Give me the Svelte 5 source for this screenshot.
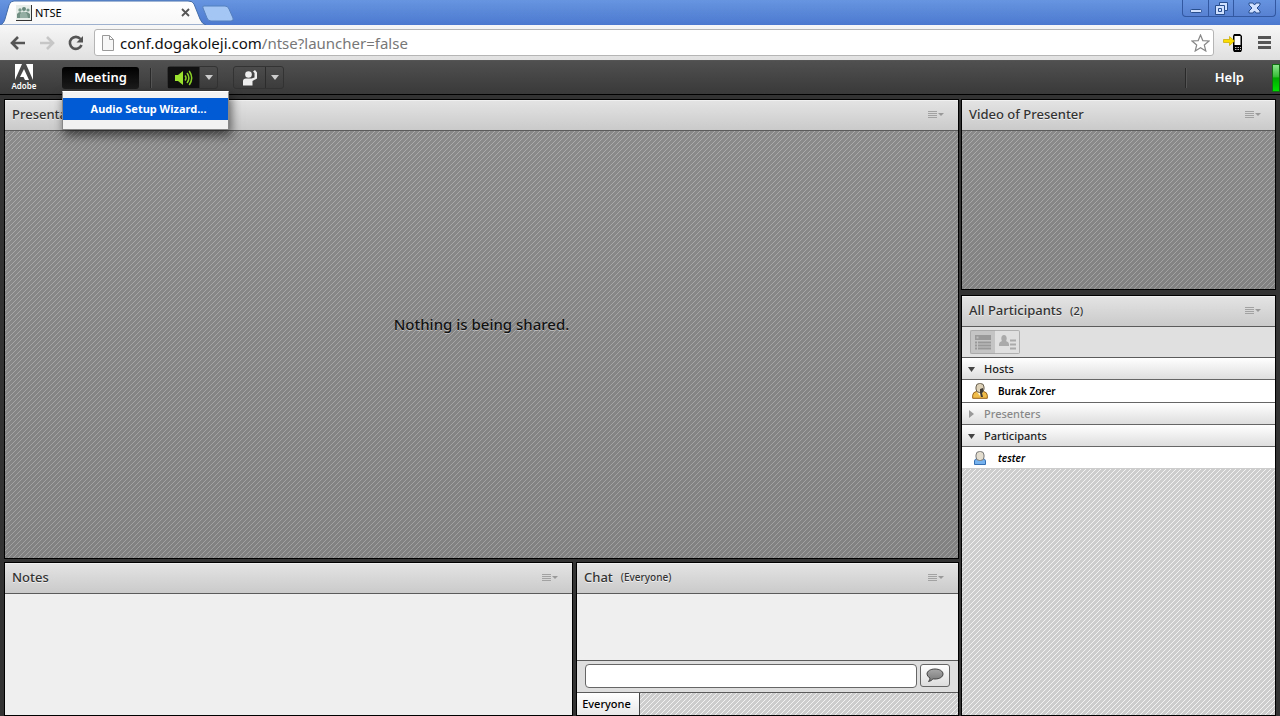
<script>
  let menuOpen = $state(true)
  let url = $state('conf.dogakoleji.com')
  let message = $state('')

  const groups = [
    { name: 'Hosts', open: true, people: [{ name: 'Burak Zorer', role: 'host' }] },
    { name: 'Presenters', open: false, people: [] },
    { name: 'Participants', open: true, people: [{ name: 'tester', role: 'guest' }] },
  ]

  const toggleMenu = () => (menuOpen = !menuOpen)
</script>

<svelte:window onkeydown={event => event.key === 'Escape' && (menuOpen = false)} />

{#snippet podMenu()}
  <button class="pod-menu" aria-label="Pod options">
    <svg width="16" height="9" viewBox="0 0 16 9">
      <path d="M0 1.5h9M0 3.5h9M0 5.5h9M0 7.5h9" stroke="#a2a2a2" />
      <path d="M10 3h6l-3 3z" fill="#999" />
    </svg>
  </button>
{/snippet}

<div class="window">
  <header class="browser">
    <div class="tabstrip">
      <svg class="tab-shape" width="234" height="25" viewBox="0 0 234 25">
        <defs>
          <linearGradient id="tab" x2="0" y2="1">
            <stop stop-color="#fff" />
            <stop offset="1" stop-color="#f7f7f7" />
          </linearGradient>
        </defs>
        <path d="M0 25C3 24 4 22 5 19L9 5Q10 1 14 1H188Q193 1 194 4L200 19Q202 24 206 25z" fill="url(#tab)" stroke="#446da9" />
        <path d="M204 6H225Q228 6 229 9L233 18Q234 21 231 21H211Q208 21 207 18L203 8Q202 6 204 6z" fill="#a4c6f5" stroke="#5580bd" />
      </svg>
      <div class="tab">
        <svg width="16" height="16" viewBox="0 0 16 16">
          <path d="M0 0h16v16H0z" fill="#333" />
          <path d="M0 0h15v15H0z" fill="#e7eee9" />
          <circle cx="4" cy="5" r="1.7" fill="#77988a" />
          <circle cx="8" cy="4" r="2" fill="#66877b" />
          <circle cx="12" cy="5" r="1.6" fill="#77988a" />
          <path d="M1 9q3-4 6 0v4H1zM7 9q3-4 7 0v4H7z" fill="#719083" />
          <path d="M4 9q4-5 7 0l1 4H4z" fill="#94aea3" />
        </svg>
        <span>NTSE</span>
        <button aria-label="Close tab">
          <svg width="9" height="9" viewBox="0 0 9 9"><path d="M1 1l7 7M8 1L1 8" stroke="#555" stroke-width="1.8" /></svg>
        </button>
      </div>
      <div class="controls">
        <button aria-label="Minimize">
          <svg width="14" height="12" viewBox="0 0 14 12"><rect x="1.5" y="7.5" width="11" height="3" rx="1" fill="#cfe0ff" stroke="#294e8e" /></svg>
        </button>
        <button aria-label="Restore">
          <svg width="13" height="13" viewBox="0 0 13 13">
            <path d="M4.5.5h8v8h-3v4h-9v-9h4z" fill="#cfe0ff" stroke="#294e8e" />
            <path d="M3.5 6.500h3v3h-3zM4.500 3.500h5v5" fill="none" stroke="#294e8e" />
          </svg>
        </button>
        <button class="wide" aria-label="Close">
          <svg width="13" height="12" viewBox="0 0 13 12"><path d="M1 1h4l1.500 2L8 1h4v2L9 6l3 3v2H8L6.500 9 5 11H1V9l3-3-3-3z" fill="#cfe0ff" stroke="#294e8e" /></svg>
        </button>
      </div>
    </div>
    <div class="toolbar">
      <button aria-label="Back">
        <svg width="16" height="14" viewBox="0 0 16 14"><path d="M8 1L2 7l6 6M2 7h13" fill="none" stroke="#555" stroke-width="2.600" /></svg>
      </button>
      <button aria-label="Forward" disabled>
        <svg width="16" height="14" viewBox="0 0 16 14"><path d="M8 1l6 6-6 6M14 7H1" fill="none" stroke="#c6c6c6" stroke-width="2.600" /></svg>
      </button>
      <button aria-label="Reload">
        <svg width="16" height="16" viewBox="0 0 16 16">
          <path d="M12.500 4A6 6 0 1 0 13.500 10" fill="none" stroke="#555" stroke-width="2.600" />
          <path d="M15 1v6.500H8.500z" fill="#555" />
        </svg>
      </button>
      <div class="address">
        <svg width="12" height="16" viewBox="0 0 12 16"><path d="M.5.5h7l4 4v11H.5zM7.500.5v4h4" fill="#f7f7f7" stroke="#999" /></svg>
        <span class="url"><b>{url}</b>/ntse?launcher=false</span>
        <button aria-label="Bookmark this page">
          <svg width="19" height="18" viewBox="0 0 19 18"><path d="M9.500 1l2.300 5.600 6.200.4-4.700 4 1.500 6-5.300-3.200L4.200 17l1.500-6L1 7l6.200-.4z" fill="#fff" stroke="#888" stroke-width="1.200" /></svg>
        </button>
      </div>
      <button class="phone" aria-label="Send to phone">
        <svg width="20" height="18" viewBox="0 0 20 18">
          <path d="M11 0h6l2 2v14l-1 2h-7l-1-2V2z" fill="#000" />
          <path d="M11.500 2h6v9h-6z" fill="#fff" />
          <path d="M12 13.500h1.500m1 0H16m1 0h1M12 15.500h1.500m1 0H16m1 0h1" stroke="#bbb" />
          <path d="M.5 5.500h6V2.500l5 4.500-5 4.500V8.500h-6z" fill="#fbdd00" stroke="#c6a700" stroke-width=".7" />
        </svg>
      </button>
      <button class="burger" aria-label="Chrome menu">
        <svg width="13" height="13" viewBox="0 0 13 13"><path d="M0 1.500h13M0 6.500h13M0 11.500h13" stroke="#555" stroke-width="3" /></svg>
      </button>
    </div>
  </header>

  <nav class="appbar">
    <div class="logo">
      <svg width="20" height="16" viewBox="0 0 20 16">
        <path d="M1 0h7L1 16zM12 0h7v16zM10 5l5 11h-4l-1.500-3H6z" fill="#fff" />
      </svg>
      <span>Adobe</span>
    </div>
    <div class="menu">
      <button class="meeting" aria-expanded={menuOpen} onclick={toggleMenu}>Meeting</button>
      {#if menuOpen}
        <div class="dropdown" role="menu">
          <button role="menuitem" onclick={toggleMenu}>Audio Setup Wizard...</button>
        </div>
      {/if}
    </div>
    <i class="divider"></i>
    <div class="split">
      <button class="on" aria-label="Mute speakers">
        <svg width="19" height="16" viewBox="0 0 19 16">
          <path d="M1 5h3l5-4v14l-5-4H1z" fill="#9be22f" />
          <path d="M11 5.500q2 2.500 0 5M13 3q3.800 5 0 10M15.200 1q5 7 0 14" fill="none" stroke="#8ad226" stroke-width="1.500" />
        </svg>
      </button>
      <button class="arrow" aria-label="Speaker options"><svg width="8" height="5" viewBox="0 0 8 5"><path d="M0 0h8L4 5z" fill="#ccc" /></svg></button>
    </div>
    <div class="split">
      <button aria-label="Raise hand">
        <svg width="16" height="16" viewBox="0 0 16 16">
          <circle cx="6.500" cy="4.500" r="3.300" fill="#eee" />
          <path d="M1 15.500V11q0-2.500 3-2.500h5.500l3-1V3L11 1.500 13 0l2 2.500v6L10.500 11v4.500H3.500V12v3.500z" fill="#eee" />
        </svg>
      </button>
      <button class="arrow" aria-label="Status options"><svg width="8" height="5" viewBox="0 0 8 5"><path d="M0 0h8L4 5z" fill="#ccc" /></svg></button>
    </div>
    <i class="divider right"></i>
    <button class="help">Help</button>
    <span class="signal"></span>
  </nav>

  <main>
    <div class="left">
      <section class="pod share">
        <header><h2>Presentation</h2>{@render podMenu()}</header>
        <div class="stage"><p>Nothing is being shared.</p></div>
      </section>
      <div class="bottom">
        <section class="pod">
          <header><h2>Notes</h2>{@render podMenu()}</header>
          <div class="paper"></div>
        </section>
        <section class="pod">
          <header><h2>Chat</h2><small>(Everyone)</small>{@render podMenu()}</header>
          <div class="paper"></div>
          <form class="compose" onsubmit={event => event.preventDefault()}>
            <input aria-label="Chat message" bind:value={message} />
            <button aria-label="Send message">
              <svg width="18" height="15" viewBox="0 0 18 15">
                <defs>
                  <linearGradient id="bubble" x2="0" y2="1">
                    <stop stop-color="#a8a8a8" />
                    <stop offset="1" stop-color="#777" />
                  </linearGradient>
                </defs>
                <path d="M9 1c4.500 0 8 2 8 5s-3.500 5-8 5q-1 0-2-.2Q5.500 13 2.500 13.500 4 12 4 10 1 8.500 1 6c0-3 3.500-5 8-5z" fill="url(#bubble)" stroke="#444" />
              </svg>
            </button>
          </form>
          <div class="chat-tabs"><button>Everyone</button></div>
        </section>
      </div>
    </div>

    <div class="side">
      <section class="pod">
        <header><h2>Video of Presenter</h2>{@render podMenu()}</header>
        <div class="stage"></div>
      </section>
      <section class="pod people">
        <header><h2>All Participants</h2><small class="count">(2)</small>{@render podMenu()}</header>
        <div class="views">
          <button class="active" aria-label="Attendee view">
            <svg width="16" height="15" viewBox="0 0 16 15">
              <path d="M0 0h16v5H0z" fill="#999" />
              <path d="M1.500 1.500h2v2h-2z" fill="#bbb" />
              <path d="M0 7.500h2m1 0h13M0 10.500h2m1 0h13M0 13.500h2m1 0h13" stroke="#999" stroke-width="2" />
            </svg>
          </button>
          <button aria-label="Status view">
            <svg width="17" height="15" viewBox="0 0 17 15">
              <ellipse cx="5" cy="3.500" rx="2.700" ry="3.500" fill="#aaa" />
              <path d="M0 11V9q0-2 3-3h4q3 1 3 3v2z" fill="#aaa" />
              <path d="M11 5.500h6M11 9.500h6M11 13.500h6" stroke="#aaa" stroke-width="2" />
            </svg>
          </button>
        </div>
        <div class="list">
          {#each groups as group}
            <button class="group" class:closed={!group.open} aria-expanded={group.open}>
              <svg width="8" height="8" viewBox="0 0 8 8">
                {#if group.open}
                  <path d="M0 2h7L3.500 7z" fill="#444" />
                {:else}
                  <path d="M1 0l5 4-5 4z" fill="#999" />
                {/if}
              </svg>
              {group.name}
            </button>
            {#each group.people as person}
              <div class="person {person.role}">
                <svg width="16" height="16" viewBox="0 0 16 16">
                  {#if person.role === 'host'}
                    <path d="M.7 15.300v-3q0-3 4-4h6.600q4 1 4 4v3z" fill="#f0bd4b" stroke="#956018" />
                    <path d="M5 9l3 4 3-4" fill="#fff5d8" />
                    <rect x="4" y=".5" width="8" height="9" rx="3.500" fill="#ddd1b8" stroke="#665d4c" />
                    <path d="M8 6l3-1v4l-1 1 1 4H9l-1-4z" fill="#413c36" />
                  {:else}
                    <path d="M2.500 14.500V11q0-2 3-2.500h5q3 .5 3 2.500v3.500z" fill="#75b2ee" stroke="#3770b3" />
                    <rect x="4" y="1.500" width="8" height="9" rx="3.500" fill="#e3ddcf" stroke="#777" />
                  {/if}
                </svg>
                <span>{person.name}</span>
              </div>
            {/each}
          {/each}
        </div>
      </section>
    </div>
  </main>
</div>

<style>
  :global(body) {
    margin: 0;
  }
  .window {
    display: flex;
    flex-direction: column;
    height: 100vh;
    overflow: hidden;
    font-family: 'Noto Sans', 'Open Sans', sans-serif;
    color: #333;
  }
  .window * {
    box-sizing: border-box;
  }
  svg {
    display: block;
    flex: none;
  }
  button {
    display: flex;
    align-items: center;
    justify-content: center;
    padding: 0;
    border: 0;
    background: none;
    font: inherit;
    color: inherit;
  }

  /* browser chrome */
  .browser {
    flex: none;
    border-bottom: 1px solid #555;
  }
  .tabstrip {
    position: relative;
    display: flex;
    justify-content: space-between;
    height: 25px;
    background: linear-gradient(#6795e0, #4c79cf);
  }
  .tab-shape {
    position: absolute;
    left: 0;
    top: 0;
  }
  .tab {
    position: relative;
    display: flex;
    align-items: center;
    gap: 3px;
    width: 190px;
    padding-left: 16px;
    font-size: 11px;
    color: #000;
  }
  .tab button {
    margin-left: auto;
  }
  .controls {
    display: flex;
    height: 17px;
    margin-right: 4px;
    border: 1px solid #3158a0;
    border-top: 0;
    border-radius: 0 0 4px 4px;
    background: linear-gradient(#6693df, #5781d2);
  }
  .controls button {
    width: 25px;
  }
  .controls button + button {
    border-left: 1px solid #3158a0;
  }
  .controls .wide {
    width: 42px;
  }
  .toolbar {
    display: flex;
    align-items: center;
    height: 35px;
    padding: 0 9px 0 10px;
    gap: 13px;
    background: linear-gradient(#f7f7f7, #e0e0e0);
  }
  .address {
    display: flex;
    flex: 1;
    align-items: center;
    gap: 6px;
    height: 27px;
    margin-left: -3px;
    padding: 0 3px 0 7px;
    border: 1px solid #b5b5b5;
    border-radius: 3px;
    background: #fff;
  }
  .url {
    flex: 1;
    font-size: 15px;
    color: #777;
  }
  .url b {
    font-weight: 400;
    color: #111;
  }
  .phone {
    margin-left: -4px;
  }
  .burger {
    margin-left: 2px;
  }

  /* meeting bar */
  .appbar {
    display: flex;
    flex: none;
    align-items: center;
    height: 34px;
    border-bottom: 1px solid #000;
    background: linear-gradient(#505050, #393939);
    color: #fff;
    font-size: 13px;
    font-weight: 600;
  }
  .logo {
    display: flex;
    flex-direction: column;
    align-items: center;
    width: 48px;
    margin-right: 14px;
    font-size: 8px;
    line-height: 11px;
  }
  .menu {
    position: relative;
  }
  .meeting {
    width: 77px;
    height: 22px;
    padding-bottom: 2px;
    border-radius: 3px;
    background: linear-gradient(#000, #1c1c1c);
  }
  .dropdown {
    position: absolute;
    z-index: 2;
    top: 24px;
    left: 0;
    width: 167px;
    padding: 6px 0 9px;
    border: 1px solid #888;
    border-top-color: #fff;
    background: #f2f2f2;
    box-shadow: 2px 5px 10px rgba(0, 0, 0, 0.6);
  }
  .dropdown button {
    width: 100%;
    height: 22px;
    padding: 0 0 1px 6px;
    background: #005bd5;
    font-size: 11px;
    font-weight: 700;
  }
  .divider {
    width: 2px;
    height: 20px;
    margin: 0 15px 0 11px;
    border-left: 1px solid #292929;
    border-right: 1px solid #555;
  }
  .divider.right {
    margin: 0 28px 0 auto;
  }
  .split {
    display: flex;
    height: 23px;
    margin-right: 15px;
    border: 1px solid #333;
    border-radius: 3px;
    background: linear-gradient(#4c4c4c, #3c3c3c);
  }
  .split button {
    width: 31px;
  }
  .split .arrow {
    width: 18px;
    border-left: 1px solid #2c2c2c;
  }
  .split .on {
    background: #111;
  }
  .help {
    margin-right: 28px;
    padding-bottom: 2px;
  }
  .signal {
    width: 8px;
    height: 28px;
    border: 1px solid #136e13;
    background: linear-gradient(#8be58b, #35bd35 45%, #00a800 50%, #00e000);
  }

  /* pods */
  main {
    display: flex;
    flex: 1;
    gap: 2px;
    min-height: 0;
    padding: 4px 4px 0;
    background: #333;
  }
  .left,
  .side {
    display: flex;
    flex-direction: column;
  }
  .left {
    flex: 1;
    gap: 3px;
  }
  .side {
    width: 315px;
    gap: 5px;
  }
  .bottom {
    display: grid;
    grid-template-columns: 569fr 383fr;
    gap: 3px;
    height: 154px;
  }
  .pod {
    display: flex;
    flex-direction: column;
    border: 1px solid #000;
    background: #efefef;
  }
  .pod header {
    display: flex;
    flex: none;
    align-items: center;
    height: 31px;
    padding: 0 14px 2px 7px;
    border-bottom: 1px solid #5b5b5b;
    background: linear-gradient(#e4e4e4, #cacaca);
    box-shadow: inset 0 1px #f0f0f0;
    text-shadow: 0 1px #f0f0f0;
  }
  h2 {
    margin: 0;
    font-size: 13px;
    font-weight: 500;
  }
  small {
    margin-left: 8px;
    font-size: 10px;
    font-weight: 500;
  }
  .count {
    font-size: 11px;
  }
  .pod-menu {
    margin-left: auto;
  }
  .share,
  .people,
  .stage,
  .paper,
  .list {
    flex: 1;
  }
  /* diagonal hatch, 5px tile with the corners filled so the lines join */
  .stage,
  .chat-tabs,
  .list {
    background: #cdcdcd url("data:image/svg+xml,%3Csvg xmlns='http://www.w3.org/2000/svg' width='5' height='5'%3E%3Cpath d='M-1 1L1-1M-1 6L6-1M4 6L6 4' stroke='white' stroke-opacity='.75'/%3E%3C/svg%3E");
  }
  .stage {
    display: flex;
    align-items: center;
    justify-content: center;
    background:
      linear-gradient(transparent, rgba(0, 0, 0, 0.06)),
      url("data:image/svg+xml,%3Csvg xmlns='http://www.w3.org/2000/svg' width='5' height='5'%3E%3Cpath d='M-1 1L1-1M-1 6L6-1M4 6L6 4' stroke='white' stroke-opacity='.28'/%3E%3C/svg%3E"),
      #8a8a8a;
  }
  .stage p {
    margin: 0 0 42px;
    font-size: 15px;
    font-weight: 500;
    color: #111;
    text-shadow: 0 1px #bbb;
  }
  .side .stage {
    flex: none;
    height: 158px;
  }
  .compose {
    display: flex;
    gap: 3px;
    height: 32px;
    padding: 3px 8px;
    border-top: 1px solid #5b5b5b;
    background: #dedede;
  }
  .compose input {
    flex: 1;
    min-width: 0;
    height: 24px;
    padding: 0 6px;
    border: 1px solid #666;
    border-radius: 4px;
    background: #fff;
    font: inherit;
    font-size: 12px;
  }
  .compose button {
    width: 30px;
    height: 23px;
    border: 1px solid #666;
    border-radius: 3px;
    background: linear-gradient(#fff, #ddd);
  }
  .chat-tabs {
    display: flex;
    height: 23px;
    border-top: 1px solid #5b5b5b;
  }
  .chat-tabs button {
    width: 63px;
    padding: 0 3px 1px 0;
    border-right: 1px solid #444;
    background: linear-gradient(#fff, #e8e8e8);
    font-size: 11px;
    font-weight: 500;
    color: #000;
  }
  .views {
    display: flex;
    height: 31px;
    padding: 3px 8px;
    border-bottom: 1px solid #5b5b5b;
    background: #e0e0e0;
  }
  .views button {
    width: 25px;
    height: 24px;
    border: 1px solid #b0b0b0;
    border-left: 0;
    border-radius: 0 2px 2px 0;
  }
  .views .active {
    border: 1px solid #aaa;
    border-right: 0;
    border-radius: 2px 0 0 2px;
    background: #c4c4c4;
  }
  .group {
    justify-content: flex-start;
    gap: 8px;
    width: 100%;
    height: 22px;
    padding-left: 6px;
    border-bottom: 1px solid #666;
    background: linear-gradient(#fff, #dedede);
    font-size: 11px;
    font-weight: 500;
    color: #222;
  }
  .group.closed {
    color: #888;
  }
  .person {
    display: flex;
    align-items: center;
    gap: 10px;
    height: 23px;
    padding-left: 10px;
    border-bottom: 1px solid #666;
    background: #fff;
    font-size: 10px;
    font-weight: 600;
    color: #000;
  }
  .guest {
    height: 22px;
    border-bottom-color: #ccc;
    font-style: italic;
  }
</style>
